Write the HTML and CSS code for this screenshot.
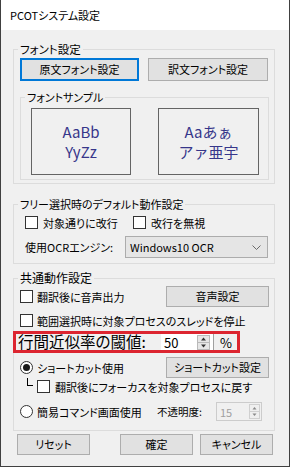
FILE: index.html
```html
<!DOCTYPE html>
<html lang="ja">
<head>
<meta charset="utf-8">
<title>PCOTシステム設定</title>
<link rel="stylesheet" href="styles.css">
</head>
<body>
<div class="window">
  <div class="titlebar">PCOTシステム設定</div>
  <div class="content">
    <fieldset class="group g-font">
      <legend>フォント設定</legend>
      <div class="btn-row">
        <div class="btn btn-default w-src">原文フォント設定</div>
        <div class="btn w-dst">訳文フォント設定</div>
      </div>
      <fieldset class="group g-sample">
        <legend>フォントサンプル</legend>
        <div class="samples">
          <div class="sample">AaBb<br>YyZz</div>
          <div class="sample sample-jp">Aaあぁ<br>アァ亜宇</div>
        </div>
      </fieldset>
    </fieldset>

    <fieldset class="group g-free">
      <legend>フリー選択時のデフォルト動作設定</legend>
      <div class="row row-checks">
        <div class="check check-first"><span class="box"></span><span>対象通りに改行</span></div>
        <div class="check"><span class="box"></span><span>改行を無視</span></div>
      </div>
      <div class="row row-ocr">
        <span class="ocr-label">使用OCRエンジン:</span>
        <div class="combo">
          <span>Windows10 OCR</span>
          <svg class="chev" width="9" height="5" viewBox="0 0 9 5"><polyline points="0.5,0.5 4.5,4.5 8.5,0.5" fill="none" stroke="#6a6a6a" stroke-width="1"/></svg>
        </div>
      </div>
    </fieldset>

    <fieldset class="group g-common">
      <legend>共通動作設定</legend>
      <div class="row r1">
        <div class="check check-tight"><span class="box"></span><span>翻訳後に音声出力</span></div>
        <div class="btn btn-side">音声設定</div>
      </div>
      <div class="row r2">
        <div class="check check-tight"><span class="box"></span><span>範囲選択時に対象プロセスのスレッドを停止</span></div>
      </div>
      <div class="row r-red">
        <span class="red-label">行間近似率の閾値:</span>
        <div class="num">
          <span class="num-text">50</span>
          <svg class="spin" width="13" height="15" viewBox="0 0 13 15"><rect x="0.5" y="0.5" width="12" height="14" fill="#e6e6e6" stroke="#b9b9b9"/><line x1="1" y1="7.5" x2="12" y2="7.5" stroke="#b9b9b9"/><path d="M6.5 2.5 L9 5.5 H4 Z" fill="#333"/><path d="M4 9.5 H9 L6.5 12.5 Z" fill="#333"/></svg>
        </div>
        <span class="pct">%</span>
      </div>
      <div class="row r3">
        <div class="check check-tight"><span class="radio on"></span><span>ショートカット使用</span></div>
        <div class="btn btn-side">ショートカット設定</div>
      </div>
      <div class="row r4">
        <span class="elbow"></span>
        <div class="check"><span class="box"></span><span>翻訳後にフォーカスを対象プロセスに戻す</span></div>
      </div>
      <div class="row r5">
        <div class="check check-tight w-radio2"><span class="radio"></span><span>簡易コマンド画面使用</span></div>
        <span class="opacity-label">不透明度:</span>
        <div class="num num-disabled">
          <span class="num-text">15</span>
          <svg class="spin" width="11" height="15" viewBox="0 0 11 15"><rect x="0.5" y="0.5" width="10" height="14" fill="#efefef" stroke="#d0d0d0"/><line x1="1" y1="7.5" x2="10" y2="7.5" stroke="#d0d0d0"/><path d="M5.5 3 L7.5 5.5 H3.5 Z" fill="#8a8a8a"/><path d="M3.5 9.5 H7.5 L5.5 12 Z" fill="#8a8a8a"/></svg>
        </div>
      </div>
    </fieldset>

    <div class="bottom">
      <div class="btn btn-bottom">リセット</div>
      <div class="btn btn-bottom b-ok">確定</div>
      <div class="btn btn-bottom b-cancel">キャンセル</div>
    </div>
  </div>
</div>
</body>
</html>
```

FILE: styles.css
```css
* { box-sizing: border-box; }

body {
  margin: 0;
  font-family: "Noto Sans CJK JP", "Noto Sans", sans-serif;
  font-size: 11px;
  color: #000;
  font-feature-settings: "palt";
}

.window {
  width: 290px;
  height: 467px;
  border: 1px solid #404040;
  border-top: 0;
  background: #f0f0f0;
  display: flex;
  flex-direction: column;
}

.titlebar {
  height: 30px;
  flex-shrink: 0;
  background: #fff;
  padding-left: 9px;
  display: flex;
  align-items: center;
  line-height: 1;
}

.content {
  flex: 1;
  padding: 0 14px 0 12px;
}

.group {
  margin: 0;
  padding: 0 5px 3px 6px;
  border: 1px solid #dcdcdc;
  min-width: 0;
}

legend {
  margin-left: -2px;
  padding: 0 2px;
  line-height: 16px;
  height: 16px;
  font-size: 11px;
}

.btn {
  height: 23px;
  background: #e1e1e1;
  border: 1px solid #adadad;
  display: flex;
  align-items: center;
  justify-content: center;
  line-height: 1;
  white-space: nowrap;
}

.btn-default { border: 2px solid #0078d7; }

.g-font { margin-top: 11px; }

.g-font > legend { font-size: 11.5px; }

.btn-row {
  display: flex;
  gap: 9px;
  margin-top: 1px;
}

.w-src { width: 119px; }
.w-dst { width: 120px; }

.g-sample {
  margin-top: 8px;
  padding: 0 0 4px 6px;
}

.samples {
  display: flex;
  gap: 27px;
  margin: 3px 0 0 4px;
}

.sample {
  width: 100px;
  height: 67px;
  border: 1px solid #646464;
  display: flex;
  align-items: center;
  justify-content: center;
  text-align: center;
  font-size: 15px;
  line-height: 20px;
  color: #36368a;
  font-feature-settings: normal;
}

.sample-jp { width: 101px; }

.row {
  display: flex;
  align-items: center;
}

.check {
  display: flex;
  align-items: center;
  gap: 5px;
  white-space: nowrap;
}

.check-tight { gap: 4px; }

.box {
  width: 13px;
  height: 13px;
  border: 1px solid #333;
  background: #fff;
  flex-shrink: 0;
}

.radio {
  width: 13px;
  height: 13px;
  border-radius: 50%;
  border: 1px solid #333;
  background: #fff;
  flex-shrink: 0;
  display: flex;
  align-items: center;
  justify-content: center;
}

.radio.on::after {
  content: "";
  width: 7px;
  height: 7px;
  border-radius: 50%;
  background: #1a1a1a;
}

.g-free {
  margin-top: 12px;
  padding-bottom: 5px;
}

.row-checks {
  height: 19px;
  margin-top: 1px;
  padding-left: 5px;
}

.check-first { width: 108px; }

.row-ocr {
  margin-top: 4px;
  padding-left: 5px;
}

.ocr-label {
  width: 100px;
  white-space: nowrap;
}

.combo {
  width: 143px;
  height: 22px;
  border: 1px solid #acacac;
  background: #e5e5e5;
  display: flex;
  align-items: center;
  justify-content: space-between;
  padding: 0 6px 0 4px;
  font-feature-settings: normal;
}

.g-common {
  margin-top: 6px;
  padding-bottom: 9px;
}

.g-common > legend { font-size: 12px; }

.r1 { height: 21px; }

.btn-side {
  width: 103px;
  height: 21px;
  margin-left: auto;
}

.r2 {
  height: 19px;
  margin-top: 4px;
}

.r-red {
  margin: 1px 0 0 -7px;
  width: 227px;
  height: 22px;
  border: 3px solid #dc2530;
  align-items: stretch;
}

.red-label {
  width: 145px;
  padding-left: 2px;
  display: flex;
  align-items: center;
  white-space: nowrap;
  font-size: 15.5px;
  line-height: 1;
}

.num {
  width: 53px;
  background: #fff;
  border-right: 1px solid #a0a0a0;
  display: flex;
  align-items: center;
  padding: 0 3px 0 3px;
  font-feature-settings: normal;
}

.r-red .num { font-size: 13px; line-height: 1; }

.num-text { flex: 1; }

.pct {
  margin-left: 6px;
  display: flex;
  align-items: center;
  font-size: 13px;
  line-height: 1;
}

.r3 {
  margin-top: 4px;
  height: 21px;
}

.r4 {
  height: 17px;
  padding-left: 7px;
}

.elbow {
  align-self: flex-start;
  width: 6px;
  height: 8px;
  border-left: 1px solid #000;
  border-bottom: 1px solid #000;
  margin-right: 4px;
}

.r5 {
  margin-top: 7px;
  height: 19px;
}

.w-radio2 { width: 137px; }

.opacity-label {
  width: 59px;
  white-space: nowrap;
  font-size: 10.5px;
}

.num-disabled {
  width: 46px;
  height: 19px;
  background: #f0f0f0;
  border: 1px solid #cccccc;
  color: #a0a0a0;
  padding: 0 1px 0 3px;
}

.bottom {
  display: flex;
  margin-top: 3px;
  padding-left: 4px;
}

.btn-bottom {
  width: 73px;
  height: 21px;
}

.b-ok { margin-left: 30px; }
.b-cancel { margin-left: 7px; }
```
